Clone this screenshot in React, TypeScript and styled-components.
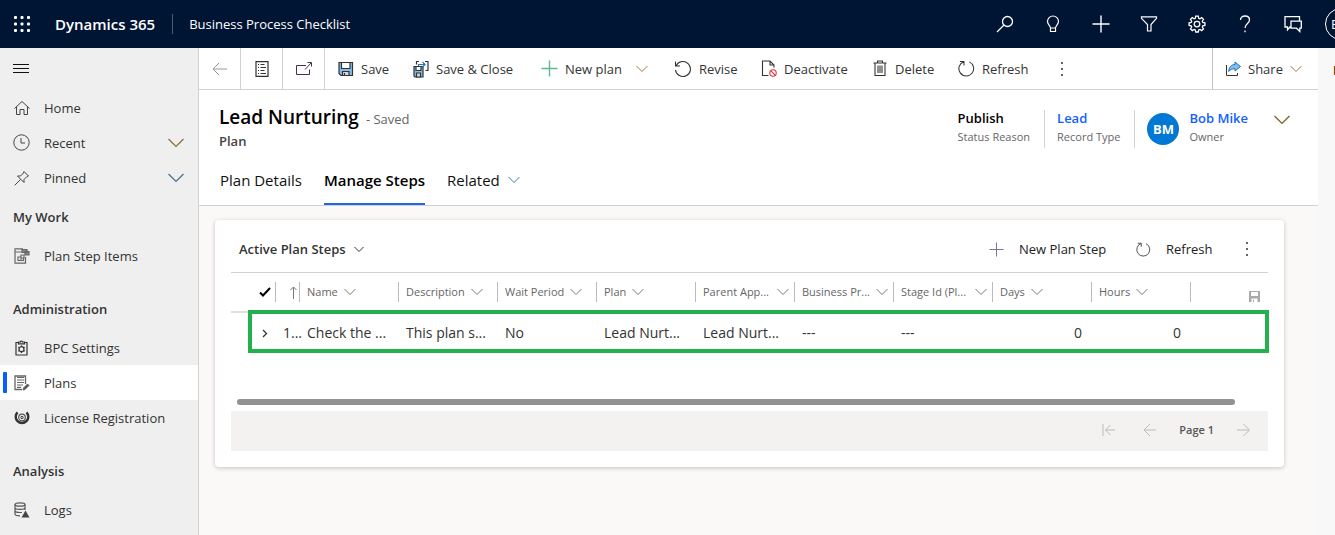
import React from "react";
import styled, { createGlobalStyle, css } from "styled-components";

const Global = createGlobalStyle`
  * { box-sizing: border-box; }
  html, body, #root { height: 100%; }
  body { margin: 0; font-family: "Open Sans", "Noto Sans", sans-serif; font-size: 13px; line-height: 20px; color: #333; background: #faf9f8; }
  button { font: inherit; color: inherit; background: none; border: 0; padding: 0; margin: 0; cursor: pointer; display: inline-flex; align-items: center; }
  a { color: inherit; text-decoration: none; }
  svg { display: block; flex: none; }
`;

/* ---------- icons ---------- */
type IconProps = { w?: number; h?: number; box?: string; color?: string; stroke?: number; children: React.ReactNode };
const Icon = ({ w = 16, h = w, box, color = "currentColor", stroke = 1, children }: IconProps) => (
  <svg width={w} height={h} viewBox={box ?? `0 0 ${w} ${h}`} fill="none" stroke={color} strokeWidth={stroke} aria-hidden="true">
    {children}
  </svg>
);

const Chevron = ({ w = 12, color = "#666", stroke = 1 }: { w?: number; color?: string; stroke?: number }) => (
  <Icon w={w} h={w / 2 + 2} color={color} stroke={stroke}>
    <path d={`M.5 1 ${w / 2} ${w / 2 + 0.5} ${w - 0.5} 1`} />
  </Icon>
);
const Dots = ({ color = "#666" }: { color?: string }) => (
  <Icon w={4} h={14} color="none">
    <path fill={color} d="M1 0h2v2H1zM1 6h2v2H1zM1 12h2v2H1z" />
  </Icon>
);
const Waffle = () => (
  <Icon w={16} color="none">
    {[0, 6.5, 13].map((y) => [0, 6.5, 13].map((x) => <rect key={`${x}-${y}`} x={x} y={y} width="3" height="3" rx="1" fill="#fff" />))}
  </Icon>
);
const Search = () => <Icon w={18}><circle cx="11.5" cy="6.5" r="5" stroke="#fff" strokeWidth="1.3" /><path stroke="#fff" strokeWidth="1.3" d="m8 10-7 7" /></Icon>;
const Bulb = () => <Icon w={18} color="#fff" stroke={1.2}><path d="M6.500 13c0-2-3-3.500-3-6.500a5.500 5.500 0 0 1 11 0c0 3-3 4.500-3 6.500v3.500h-5zM6.500 13h5" /></Icon>;
const Plus = ({ color = "#fff", w = 18, stroke = 1.4 }: { color?: string; w?: number; stroke?: number }) => <Icon w={w} color={color} stroke={stroke}><path d={`M${w / 2} .5v${w - 1}M.5 ${w / 2}h${w - 1}`} /></Icon>;
const Filter = () => <Icon w={18} color="#fff" stroke={1.2}><path d="M1.500 1.800h15v1.500L11 9.500v6.500H7.500V9.500L1.500 3.300z" /></Icon>;
const Gear = () => (
  <Icon w={18} color="#fff" stroke={1.3}>
    <path d="M7.700 1.200h2.600l.4 2.100 1.200.5 1.800-1.200 1.800 1.800-1.200 1.800.5 1.200 2.100.4v2.600l-2.100.4-.5 1.200 1.200 1.800-1.800 1.800-1.800-1.200-1.200.5-.4 2.100H7.700l-.4-2.100-1.200-.5-1.800 1.200-1.800-1.800 1.200-1.800-.5-1.200-2.100-.4V7.800l2.100-.4.5-1.200-1.200-1.800 1.800-1.800 1.800 1.200 1.200-.5z" />
    <circle cx="9" cy="9.100" r="2.800" />
  </Icon>
);
const Help = () => <Icon w={18} color="#fff" stroke={1.3}><path d="M4.500 5c0-2.500 2-4 4.500-4s4.500 1.500 4.500 4c0 3.500-4.500 3.500-4.500 8M9 15.500v1.800" /></Icon>;
const Chat = () => <Icon w={18} color="#fff" stroke={1.3}><path d="M7 12H6l-2.500 2.800V12H1V1.600h14.500v4M7 6.200h10.300v7h-1.500v3.200l-3.300-3.200H7z" /></Icon>;
const Back = ({ w = 15, color = "#999" }: { w?: number; color?: string }) => <Icon w={w} h={14} color={color}><path d={`M7 1 1 7l6 6M1 7h${w - 1}`} /></Icon>;
const Forward = () => <Icon w={13} h={14} color="#bbb"><path d="m6.500 1 6 6-6 6M12 7H0" /></Icon>;
const First = () => <Icon w={13} h={14} color="#bbb"><path d="M1 1v12M8.500 2l-5 5 5 5M3.500 7H13" /></Icon>;
const Form = () => <Icon w={14} h={16} color="#333" stroke={1.2}><path d="M1 .6h12v14.800H1z" /><path strokeWidth="1" d="M3 3.500h1M5.500 3.500h4M3 6.500h1M5.500 6.500H11M3 9.500h1M5.500 9.500h4M3 12.500h1M5.500 12.500H11" /></Icon>;
const PopOut = () => <Icon w={16} h={14} color="#4a3050"><path d="M10 3.500H.5v9h13V7.500M9 7.500l6-6.500M11.500 .5h4V4.500" /></Icon>;
const Save = () => <Icon w={16} color="#333" stroke={1.2}><path fill="#83beec" d="M1 1.500h13.500v13H3l-2-2z" /><path fill="#fff" d="M3.500 1.500h8.500v6H3.500z" /><path fill="#d8d8d8" d="M4.500 10.500h6.500v4h-6.500z" /><path d="M6.500 12v2.500" /></Icon>;
const SaveClose = () => (
  <Icon w={16} h={18} color="#333" stroke={1.2}>
    <path fill="#83beec" d="M1 6.500h9v10.500H2l-1-1z" /><path fill="#fff" d="M3 6.500h5v4H3z" /><path fill="#d8d8d8" d="M3.500 13h4v4h-4z" />
    <path d="M3.500 4.500v-3H6M12 1.500h3v9h-2.500" /><path stroke="#2a78b8" d="M5.500 6V4.500h6M9.500 2l2.500 2.500L9.500 7" />
  </Icon>
);
const Revise = () => <Icon w={18} color="#333" stroke={1.1}><path d="M2.300 5.500a7.500 7.500 0 1 1-.8 4.500M1.500 1.500v4.500H6" /></Icon>;
const RefreshIcon = ({ w = 17, color = "#333" }: { w?: number; color?: string }) => <Icon w={w} box="0 0 18 18" color={color} stroke={1.1}><path d="M12 2A7.800 7.800 0 1 1 6 1.800M2 1.500h4.300v4.300" /></Icon>;
const Deactivate = () => <Icon w={16} h={17} color="#333" stroke={1.1}><path d="M7.500 15.500H1.500V1h7.500l4 4v2.500M9 1v4h4" /><circle cx="12" cy="13" r="3.200" stroke="#d9363e" /><path stroke="#d9363e" d="m9.700 10.700 4.600 4.600" /></Icon>;
const Trash = () => <Icon w={16} h={17} color="#333" stroke={1.1}><path d="M1.500 3h13M5.500 3V1h5v2M3 3v12.500h10V3M6 5.500V13M8 5.500V13M10 5.500V13" /></Icon>;
const Share = () => <Icon w={16} color="#333"><path d="M1.500 4v10.500h11V12" /><path stroke="#1f6fb5" fill="#83beec" d="M10 1 15.500 5.500 10 10V7.700C7.500 7.700 5.500 8 3.700 10.500 4 6.500 6 3.500 10 3.500z" /></Icon>;
const Hamburger = () => <Icon w={16} h={10} color="#111"><path d="M0 .5h16M0 4.500h16M0 8.500h16" /></Icon>;
const Home = () => <Icon w={16} color="#444"><path d="M.5 8.500 8 1.500l7.500 7M2.500 7v7.500h3.500v-5h4v5h3.500V7" /></Icon>;
const Clock = () => <Icon w={17} color="#444"><circle cx="8.500" cy="8.500" r="7.700" /><path d="M8 4v5h4" /></Icon>;
const Pin = () => <Icon w={16} color="#444"><path d="m10 1.500 4.500 4.500-1.500.5-3 3v3L3.500 6h3l3-3zM6.500 9.500.7 15.300" /></Icon>;
const StepItems = () => <Icon w={16} color="#666" stroke={1.2}><path d="M9 .8H1v14.400h10.500V9M1 4h7" /><path fill="#888" d="M8 1.500h5v3H8zM11 3.500h4v3.500h-4z" /><path d="M4 9h3v3.500H4zM7 7h3v3H7zM7 12.500h2.500V10" /></Icon>;
const Clipboard = () => <Icon w={13} h={16} color="#333"><path strokeWidth="1.200" d="M3.500 2.500H1v12.500h11V2.500H9.500M3.500 3.800V2h2a1 1 0 0 1 2 0h2v1.800z" /><circle cx="6.500" cy="9.200" r="2.500" strokeWidth="1.200" /><path d="M6.500 5.500v1M6.500 12v1M3.200 7.200l1 .6M8.900 10.600l1 .6M9.800 7.200l-1 .6M4.100 10.600l-1 .6" /></Icon>;
const PlansIcon = () => <Icon w={16} color="#666"><path strokeWidth="1.300" d="M11.500 9V1H1v13.500h7" /><path d="M3 5h7M3 7.500h7M3 10h6M3 12.300h4M3 2.500h7" strokeWidth="1.200" /><path fill="#555" d="m9 15 .5-2 4-4 1.500 1.500-4 4z" /></Icon>;
const License = () => <Icon w={16} color="#333"><path strokeWidth="2.400" d="M3.500 2.300a6.300 6.300 0 1 0 9 0" /><circle cx="8" cy="7.500" r="3.300" stroke="#555" strokeWidth="1.200" /><circle cx="8" cy="7.500" r="1.200" /></Icon>;
const Logs = () => <Icon w={16} color="#555" stroke={1.2}><ellipse cx="6" cy="2.500" rx="5" ry="1.700" /><path d="M1 2.500v9.500c0 1 2 1.800 5 1.800M11 2.500V8M1 5.700c0 1 2 1.700 5 1.700s5-.7 5-1.700M1 8.800c0 1 2 1.700 5 1.700h2" /><path stroke="none" fill="#444" d="m11.500 8.500 4 7h-8z" /></Icon>;
const Tick = () => <Icon w={12} h={10} color="#000" stroke={2}><path d="m1 5.500 3 3L11 1" /></Icon>;
const Up = () => <Icon w={7} h={13} color="#777"><path d="M3.500 13V1M.5 4l3-3 3 3" /></Icon>;
const Right = () => <Icon w={6} h={9} color="#333" stroke={1.3}><path d="m1 1 3.500 3.500L1 8" /></Icon>;
const Disk = () => <Icon w={11} color="none"><path fill="#aaa" fillRule="evenodd" d="M0 0h11v11H0zM2 1h7v4H2zM2.500 7.500h6V11h-6z" /><path fill="#aaa" d="M4 8.500h1V11H4z" /></Icon>;

/* ---------- layout ---------- */
const Page = styled.div`min-height: 100%; display: flex; flex-direction: column; overflow: hidden;`;
const TopBar = styled.header`
  height: 48px; flex: none; background: #001433; color: #fff; display: flex; align-items: center; padding-left: 14px; overflow: hidden;
`;
const Brand = styled.a`margin-left: 25px; padding-right: 17px; font-size: 15px; font-weight: 600; line-height: 20px; border-right: 1px solid #4d5b70; white-space: nowrap;`;
const AppName = styled.a`margin-left: 16px; white-space: nowrap;`;
const TopActions = styled.div`margin-left: auto; display: flex; align-items: center; gap: 30px; flex: none;`;
const UserBadge = styled.button`
  && { width: 32px; height: 32px; border: 1px solid #fff; border-radius: 50%; padding-left: 5px; font-size: 13px; margin-left: -7px; margin-right: -22px; }
`;
const Body = styled.div`flex: 1; display: flex; min-width: 0;`;
const Nav = styled.nav`width: 199px; flex: none; background: #efefef; border-right: 1px solid #d2d2d2;`;
const NavToggle = styled.button`&& { height: 42px; padding: 0 13px; }`;
const NavGroup = styled.div`margin-bottom: 15px;`;
const NavTop = styled.div`margin-bottom: 1px;`;
const NavHeading = styled.h2`margin: 0; height: 42px; padding-left: 13px; font-size: 13px; font-weight: 600; line-height: 42px; color: #333;`;
const NavItem = styled.a<{ $active?: boolean }>`
  height: 35px; display: flex; align-items: center; padding: 0 14px 0 13px; position: relative;
  ${(p) => p.$active && css`background: #fff; &::before { content: ""; position: absolute; left: 3px; top: 7px; width: 4px; height: 21px; background: #0b5cff; border-radius: 1px; }`}
`;
const NavIcon = styled.span`width: 17px; margin-right: 14px; display: flex; justify-content: center;`;
const NavLabel = styled.span`flex: 1;`;

const Main = styled.main`flex: 1; min-width: 0; display: flex; flex-direction: column;`;
const SidePane = styled.aside`width: 17px; flex: none; background: #f8f8f8; overflow: hidden; padding: 12px 0 0 15px; color: #111; font-weight: 600;`;
const CommandBar = styled.div`height: 42px; flex: none; background: #fff; border-bottom: 1px solid #d2d2d2; display: flex; align-items: stretch;`;
const IconCommand = styled.button`&& { width: 42px; justify-content: center; border-right: 1px solid #d2d2d2; }`;
const Commands = styled.div`flex: 1; display: flex; padding-left: 13px;`;
const Command = styled.button<{ $w?: number }>`&& { gap: 7px; white-space: nowrap; width: ${(p) => (p.$w ? `${p.$w}px` : "auto")}; }`;
const CommandChevron = styled.span`margin-left: 7px;`;
const ShareCommand = styled.button`&& { gap: 7px; width: 106px; padding-left: 12px; border-left: 1px solid #c2c2c2; }`;

const RecordHead = styled.section`background: #fff; border-bottom: 1px solid #d2d2d2; flex: none;`;
const HeadRow = styled.div`display: flex; justify-content: space-between; height: 60px; padding: 14px 28px 0 20px;`;
const Title = styled.h1`margin: 0; font-size: 19px; font-weight: 600; line-height: 26px; color: #000; white-space: nowrap;`;
const SavedMark = styled.span`margin-left: 7px; font-size: 13px; font-weight: 400; color: #666;`;
const Entity = styled.div`font-weight: 600; color: #444; line-height: 18px;`;
const Facts = styled.div`display: flex; padding-top: 6px;`;
const Fact = styled.div`display: flex; height: 38px; padding: 0 12px; border-right: 1px solid #d2d2d2; white-space: nowrap; &:last-of-type { border: 0; }`;
const FactValue = styled.div<{ $link?: boolean }>`font-weight: 600; line-height: 16px; color: ${(p) => (p.$link ? "#1160ff" : "#000")};`;
const FactLabel = styled.div`font-size: 11px; line-height: 22px; color: #666; padding-right: 2px;`;
const Persona = styled.span`width: 32px; height: 32px; margin: 3px 10px 0 0; border-radius: 50%; background: #0078d4; color: #fff; font-weight: 700; line-height: 32px; text-align: center;`;
const Expand = styled.button`&& { margin-left: 14px; height: 20px; }`;
const Tabs = styled.div`display: flex; gap: 22px; padding: 17px 21px 0;`;
const Tab = styled.button<{ $active?: boolean }>`
  && { font-size: 15px; height: 38px; padding-bottom: 10px; gap: 8px; color: #111; border-bottom: 2px solid transparent;
  ${(p) => p.$active && css`font-weight: 600; color: #000; border-bottom-color: #2266e3;`} }
`;

const Content = styled.section`flex: 1; background: #faf9f8; padding: 14px 34px 40px 16px;`;
const Card = styled.div`background: #fff; border-radius: 4px; box-shadow: 0 1px 4px rgba(0, 0, 0, 0.22); padding: 16px;`;
const GridHead = styled.div`height: 37px; display: flex; align-items: center; border-bottom: 1px solid #d2d2d2; padding: 0 9px 10px 8px;`;
const ViewPicker = styled.button`&& { font-weight: 600; gap: 8px; }`;
const GridActions = styled.div`margin-left: auto; display: flex; align-items: center;`;
const GridCommand = styled.button<{ $w: number }>`&& { width: ${(p) => p.$w}px; gap: 15px; white-space: nowrap; color: #222; }`;
const More = styled.button`&& { width: 24px; justify-content: center; }`;

const Table = styled.table`width: 100%; table-layout: fixed; border-collapse: separate; border-spacing: 0;`;
const HeadCell = styled.th`
  height: 40px; padding: 0; font-weight: 400; font-size: 11px; color: #666; text-align: left; vertical-align: middle; border-bottom: 2px solid #e0e0e0;
`;
const HeadInner = styled.div<{ $end?: number; $line?: boolean }>`
  display: flex; align-items: center; gap: 6px; height: 20px; padding-left: 7px; padding-right: 5px; white-space: nowrap;
  ${(p) => p.$line !== false && css`border-left: 1px solid #bbb;`}
  ${(p) => p.$end !== undefined && css`justify-content: flex-end; padding-right: ${p.$end}px;`}
`;
const HeadText = styled.span<{ $fill?: boolean }>`${(p) => p.$fill && css`flex: 1;`}`;
const DiskSlot = styled.span`align-self: flex-end;`;
const Cell = styled.td<{ $right?: boolean }>`
  height: 40px; padding: 0 9px 0 8px; font-size: 14px; color: #333; white-space: nowrap;
  text-align: ${(p) => (p.$right ? "right" : "left")};
`;
const TightCell = styled(Cell)`padding: 0 0 0 8px;`;
const ExpandCell = styled(Cell)`padding: 0 0 0 31px;`;
const TableWrap = styled.div`position: relative;`;
const RowMark = styled.div`position: absolute; left: 17px; right: -1px; top: 37px; height: 43px; border: 4px solid #22b14c; pointer-events: none;`;
const ScrollTrack = styled.div`margin: 46px 33px 6px 6px; height: 6px; border-radius: 3px; background: #929292;`;
const Pager = styled.footer`height: 40px; background: #f3f2f1; display: flex; justify-content: flex-end; align-items: center; padding: 0 18px 3px 0; color: #555;`;
const PageButton = styled.button`&& { width: 13px; justify-content: center; }`;
const PageNo = styled.span`margin: 0 23px; font-size: 11px; font-weight: 600;`;
const FirstGap = styled.span`width: 28px;`;

type NavEntry = { label: string; icon: React.ReactNode; active?: boolean };
const groups: { title: string; items: NavEntry[] }[] = [
  { title: "My Work", items: [{ label: "Plan Step Items", icon: <StepItems /> }] },
  { title: "Administration", items: [{ label: "BPC Settings", icon: <Clipboard /> }, { label: "Plans", icon: <PlansIcon />, active: true }, { label: "License Registration", icon: <License /> }] },
  { title: "Analysis", items: [{ label: "Logs", icon: <Logs /> }] },
];

const columns: { title: string; value: string; number?: boolean; fill?: boolean }[] = [
  { title: "Name", value: "Check the ..." },
  { title: "Description", value: "This plan s..." },
  { title: "Wait Period", value: "No" },
  { title: "Plan", value: "Lead Nurt..." },
  { title: "Parent App...", value: "Lead Nurt...", fill: true },
  { title: "Business Pr...", value: "---", fill: true },
  { title: "Stage Id (Pl...", value: "---", fill: true },
  { title: "Days", value: "0", number: true },
  { title: "Hours", value: "0", number: true },
];

export default function App() {
  return (
    <>
      <Global />
      <Page>
        <TopBar>
          <button aria-label="Apps"><Waffle /></button>
          <Brand href="#">Dynamics 365</Brand>
          <AppName href="#">Business Process Checklist</AppName>
          <TopActions>
            <button aria-label="Search"><Search /></button>
            <button aria-label="Ideas"><Bulb /></button>
            <button aria-label="Add"><Plus /></button>
            <button aria-label="Filter"><Filter /></button>
            <button aria-label="Settings"><Gear /></button>
            <button aria-label="Help"><Help /></button>
            <button aria-label="Chat"><Chat /></button>
            <UserBadge>BM</UserBadge>
          </TopActions>
        </TopBar>
        <Body>
          <Nav>
            <NavToggle aria-label="Toggle navigation"><Hamburger /></NavToggle>
            <NavTop>
              <NavItem href="#"><NavIcon><Home /></NavIcon><NavLabel>Home</NavLabel></NavItem>
              <NavItem href="#"><NavIcon><Clock /></NavIcon><NavLabel>Recent</NavLabel><Chevron w={16} color="#8a6a3c" stroke={1.2} /></NavItem>
              <NavItem href="#"><NavIcon><Pin /></NavIcon><NavLabel>Pinned</NavLabel><Chevron w={16} color="#3c6f96" stroke={1.2} /></NavItem>
            </NavTop>
            {groups.map((g) => (
              <NavGroup key={g.title}>
                <NavHeading>{g.title}</NavHeading>
                {g.items.map((i) => (
                  <NavItem key={i.label} href="#" $active={i.active}><NavIcon>{i.icon}</NavIcon><NavLabel>{i.label}</NavLabel></NavItem>
                ))}
              </NavGroup>
            ))}
          </Nav>
          <Main>
            <CommandBar>
              <IconCommand aria-label="Back"><Back /></IconCommand>
              <IconCommand aria-label="Form"><Form /></IconCommand>
              <IconCommand aria-label="Open in new window"><PopOut /></IconCommand>
              <Commands>
                <Command $w={75}><Save />Save</Command>
                <Command $w={128}><SaveClose />Save &amp; Close</Command>
                <Command $w={133}><Plus color="#5fb98a" w={17} />New plan<CommandChevron><Chevron color="#a8763c" /></CommandChevron></Command>
                <Command $w={87}><Revise />Revise</Command>
                <Command $w={111}><Deactivate />Deactivate</Command>
                <Command $w={86}><Trash />Delete</Command>
                <Command $w={102}><RefreshIcon />Refresh</Command>
                <Command aria-label="More commands"><Dots /></Command>
              </Commands>
              <ShareCommand><Share />Share<Chevron color="#a8763c" /></ShareCommand>
            </CommandBar>
            <RecordHead>
              <HeadRow>
                <div>
                  <Title>Lead Nurturing<SavedMark>- Saved</SavedMark></Title>
                  <Entity>Plan</Entity>
                </div>
                <Facts>
                  <Fact><div><FactValue>Publish</FactValue><FactLabel>Status Reason</FactLabel></div></Fact>
                  <Fact><div><FactValue $link><a href="#">Lead</a></FactValue><FactLabel>Record Type</FactLabel></div></Fact>
                  <Fact><Persona>BM</Persona><div><FactValue $link><a href="#">Bob Mike</a></FactValue><FactLabel>Owner</FactLabel></div></Fact>
                  <Expand aria-label="Expand header"><Chevron w={16} color="#7a5a20" stroke={1.2} /></Expand>
                </Facts>
              </HeadRow>
              <Tabs role="tablist">
                <Tab role="tab">Plan Details</Tab>
                <Tab role="tab" $active aria-selected="true">Manage Steps</Tab>
                <Tab role="tab">Related <Chevron color="#3c7fa6" /></Tab>
              </Tabs>
            </RecordHead>
            <Content>
              <Card>
                <GridHead>
                  <ViewPicker>Active Plan Steps <Chevron w={10} color="#333" /></ViewPicker>
                  <GridActions>
                    <GridCommand $w={147}><Plus color="#77749a" w={15} stroke={1} />New Plan Step</GridCommand>
                    <GridCommand $w={99}><RefreshIcon w={15} color="#444" />Refresh</GridCommand>
                    <More aria-label="More"><Dots /></More>
                  </GridActions>
                </GridHead>
                <TableWrap>
                  <Table>
                    <colgroup>
                      <col width="44" /><col width="24" />
                      {columns.map((c) => <col key={c.title} />)}
                      <col width="78" />
                    </colgroup>
                    <thead>
                      <tr>
                        <HeadCell><HeadInner $line={false} $end={4}><Tick /></HeadInner></HeadCell>
                        <HeadCell><HeadInner $end={2}><Up /></HeadInner></HeadCell>
                        {columns.map((c) => (
                          <HeadCell key={c.title}><HeadInner><HeadText $fill={c.fill}>{c.title}</HeadText><Chevron color="#777" /></HeadInner></HeadCell>
                        ))}
                        <HeadCell><HeadInner $end={8}><DiskSlot><Disk /></DiskSlot></HeadInner></HeadCell>
                      </tr>
                    </thead>
                    <tbody>
                      <tr>
                        <ExpandCell><button aria-label="Expand row"><Right /></button></ExpandCell>
                        <TightCell>1...</TightCell>
                        {columns.map((c) => <Cell key={c.title} $right={c.number}>{c.value}</Cell>)}
                        <Cell />
                      </tr>
                    </tbody>
                  </Table>
                  <RowMark />
                </TableWrap>
                <ScrollTrack />
                <Pager>
                  <PageButton aria-label="First page"><First /></PageButton>
                  <FirstGap />
                  <PageButton aria-label="Previous page"><Back w={13} color="#bbb" /></PageButton>
                  <PageNo>Page 1</PageNo>
                  <PageButton aria-label="Next page"><Forward /></PageButton>
                </Pager>
              </Card>
            </Content>
          </Main>
          <SidePane>I</SidePane>
        </Body>
      </Page>
    </>
  );
}
